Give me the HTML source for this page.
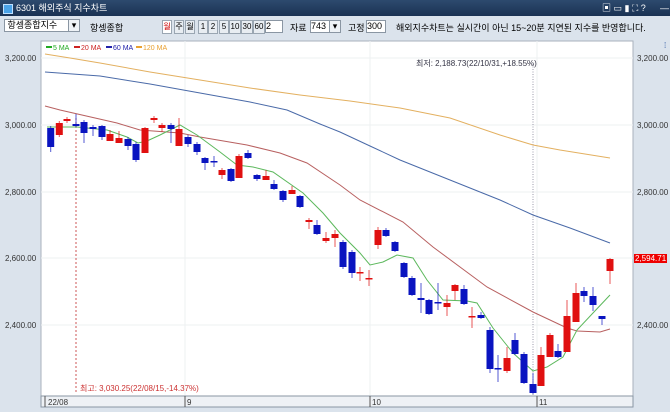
<!DOCTYPE html><html><head><meta charset="utf-8"><style>
body{margin:0;width:670px;height:412px;overflow:hidden;background:#dbe3ec;font-family:"Liberation Sans","Noto Sans CJK KR",sans-serif;position:relative}
.t{position:absolute;left:0;top:0;width:670px;height:16px;background:linear-gradient(#2d4a6e,#1a3253);color:#fff;font-size:9px;line-height:16px}
.tb{position:absolute;left:0;top:16px;width:670px;height:22px;background:#dbe3ec;font-size:9px}
.a{position:absolute;white-space:nowrap}
.bx{position:absolute;border:1px solid #8a96a3;background:#fff;height:11px;font-size:9px;line-height:11px}
.btn{position:absolute;top:20px;height:12px;width:8px;border:1px solid #9aa6b2;background:#e8edf2;font-size:8px;line-height:12px;text-align:center}
.ax{position:absolute;font-size:8px;color:#333}
</style></head><body>
<div class="t"><span class="a" style="left:3px;top:4px;width:8px;height:8px;background:#4aa3e8;border:1px solid #bfe0ff"></span><span class="a" style="left:16px">6301 해외주식 지수차트</span>
<span class="a" style="left:602px;top:0">▣ ▭ ▮ ⛶ ?</span><span class="a" style="left:660px">—</span></div>
<div class="tb">
<div class="bx" style="left:4px;top:3px;width:64px">&nbsp;항셍종합지수</div>
<div class="bx" style="left:68px;top:3px;width:10px;background:#eef2f6;text-align:center">▾</div>
<span class="a" style="left:90px;top:5px">항셍종합</span>
</div>
<div class="btn" style="left:162px;color:#c00;background:#fff">월</div>
<div class="btn" style="left:174px">주</div><div class="btn" style="left:185px">월</div>
<div class="btn" style="left:198px">1</div><div class="btn" style="left:208px">2</div><div class="btn" style="left:219px">5</div>
<div class="btn" style="left:229px;width:10px">10</div><div class="btn" style="left:241px;width:10px">30</div><div class="btn" style="left:253px;width:10px">60</div>
<div class="bx" style="left:265px;top:20px;width:16px">2</div>
<span class="a" style="left:290px;top:21px;font-size:9px">자료</span>
<div class="bx" style="left:310px;top:20px;width:18px">743</div>
<div class="bx" style="left:329px;top:20px;width:10px;background:#eef2f6;text-align:center">▾</div>
<span class="a" style="left:348px;top:21px;font-size:9px">고정</span>
<div class="bx" style="left:366px;top:20px;width:18px">300</div>
<span class="a" style="left:396px;top:21px;font-size:9px">해외지수차트는 실시간이 아닌 15~20분 지연된 지수를 반영합니다.</span>
<div class="ax" style="left:5px;top:54px">3,200.00</div><div class="ax" style="left:5px;top:121px">3,000.00</div><div class="ax" style="left:5px;top:188px">2,800.00</div><div class="ax" style="left:5px;top:254px">2,600.00</div><div class="ax" style="left:5px;top:321px">2,400.00</div>
<div class="ax" style="left:637px;top:54px">3,200.00</div><div class="ax" style="left:637px;top:121px">3,000.00</div><div class="ax" style="left:637px;top:188px">2,800.00</div><div class="ax" style="left:637px;top:321px">2,400.00</div>
<div class="ax" style="left:634px;top:254px;background:#e00;color:#fff;padding:0 1px">2,594.71</div>
<div class="ax" style="left:664px;top:41px;color:#2a55a0">⁞</div>
<svg style="position:absolute;left:0;top:0" width="670" height="412">
<rect x="41" y="41" width="592" height="355" fill="#fff" stroke="#a8b2bd"/>
<g stroke="#eef0f2" stroke-width="1"><line x1="41" y1="58" x2="633" y2="58"/><line x1="41" y1="125" x2="633" y2="125"/><line x1="41" y1="192" x2="633" y2="192"/><line x1="41" y1="258" x2="633" y2="258"/><line x1="41" y1="325" x2="633" y2="325"/><line x1="185" y1="41" x2="185" y2="396"/><line x1="370" y1="41" x2="370" y2="396"/><line x1="537" y1="41" x2="537" y2="396"/></g>
<rect x="41" y="396" width="592" height="11" fill="#eef1f5" stroke="#8a96a3"/>
<g stroke="#555"><line x1="45" y1="396" x2="45" y2="407"/><line x1="185" y1="396" x2="185" y2="407"/><line x1="370" y1="396" x2="370" y2="407"/><line x1="537" y1="396" x2="537" y2="407"/></g>
<g font-size="8" fill="#333"><text x="48" y="405">22/08</text><text x="187" y="405">9</text><text x="372" y="405">10</text><text x="539" y="405">11</text></g>
<g font-size="7"><line x1="46" y1="47" x2="52" y2="47" stroke="#2a2" stroke-width="2"/><text x="53" y="50" fill="#2a2">5 MA</text>
<line x1="74" y1="47" x2="80" y2="47" stroke="#c22" stroke-width="2"/><text x="81" y="50" fill="#c22">20 MA</text>
<line x1="106" y1="47" x2="112" y2="47" stroke="#22a" stroke-width="2"/><text x="113" y="50" fill="#22a">60 MA</text>
<line x1="136" y1="47" x2="142" y2="47" stroke="#e9a030" stroke-width="2"/><text x="143" y="50" fill="#e9a030">120 MA</text></g>
<line x1="76" y1="118" x2="76" y2="392" stroke="#c55" stroke-dasharray="2,2"/>
<line x1="533" y1="64" x2="533" y2="395" stroke="#99a" stroke-dasharray="1,1.5"/>
<text x="416" y="66" font-size="8" fill="#334">최저: 2,188.73(22/10/31,+18.55%)</text>
<text x="80" y="391" font-size="8" fill="#c33">최고: 3,030.25(22/08/15,-14.37%)</text>
<g fill="none" stroke-width="1">
<polyline stroke="#e3b060" points="45,54 70,58 100,63 150,72 200,80 250,88 300,95 350,101 400,108 450,118 500,135 533,145 560,150 610,158"/>
<polyline stroke="#4a6aa8" points="45,72 100,76 150,84 200,93 250,102 287,110 320,124 340,132 370,146 400,160 450,180 500,200 533,215 570,228 610,243"/>
<polyline stroke="#b86060" points="45,106 60,110 117,123 140,130 180,133 200,137 247,145 280,153 307,163 340,185 360,200 403,222 433,247 487,287 533,312 567,328 577,331 600,332 610,329"/>
<polyline stroke="#5cb85c" points="47,127 77,127 107,130 127,137 138,143 147,141 160,135 180,125 197,135 220,152 237,165 253,167 273,172 303,193 323,213 340,233 360,253 370,265 383,262 397,255 413,258 427,280 443,300 467,301 477,303 493,328 513,353 533,371 547,367 563,357 577,330 593,313 610,295"/>
</g>
<g id="c"></g>
</svg>
<script>
var d=[[50.7,'b',128,147,126,152],[59.3,'r',123,135,121,137],[67,'r',119,121,117,123],[76,'b',124,126,114,127],[84,'b',122,133,120,143],[93,'b',127,129,125,136],[102,'b',126,137,125,140],[110,'r',134,141,130,141],[119,'r',138,143,131,143],[128,'b',139,146,137,150],[136,'b',144,160,142,162],[145,'r',128,153,127,153],[154,'r',118,120,116,123],[162,'r',125,128,123,132],[171,'b',125,129,123,143],[179,'r',129,146,118,146],[188,'b',137,144,135,147],[197,'b',144,152,142,155],[205,'b',158,163,157,170],[214,'b',161,162,156,167],[222,'r',170,175,168,179],[231,'b',169,181,168,182],[239,'r',156,178,154,178],[248,'b',153,158,150,159],[257,'b',175,179,174,181],[266,'r',176,180,170,180],[274,'b',184,189,180,190],[283,'b',191,200,190,202],[292,'r',190,194,186,194],[300,'b',196,207,195,208],[309,'r',220,222,218,229],[317,'b',225,234,220,235],[326,'r',238,241,232,243],[335,'r',234,238,230,247],[343,'b',242,267,240,269],[352,'b',252,273,250,278],[360,'r',272,273,267,281],[369,'r',278,279,270,286],[378,'r',230,245,227,249],[386,'b',230,236,228,237],[395,'b',242,251,241,252],[404,'b',263,277,262,278],[412,'b',278,295,276,296],[421,'b',298,300,283,313],[429,'b',300,314,299,315],[438,'b',302,303,283,310],[447,'r',303,307,295,316],[455,'r',285,291,284,300],[464,'b',289,304,285,305],[472,'r',316,317,307,328],[481,'b',315,318,312,319],[490,'b',330,369,327,373],[498,'b',368,369,355,382],[507,'r',358,371,347,373],[515,'b',340,354,333,355],[524,'b',354,383,352,384],[533,'b',384,393,373,394],[541,'r',355,386,347,386],[550,'r',335,357,333,357],[558,'b',351,357,344,358],[567,'r',316,352,300,352],[576,'r',293,322,283,322],[584,'b',291,296,287,302],[593,'b',296,305,287,311],[602,'b',316,319,316,325],[610,'r',259,271,258,284]];
var s='';d.forEach(function(c){var col=c[1]=='r'?'#e01010':'#0a14c0';var h=Math.max(c[3]-c[2],1.5);
s+='<line x1="'+c[0]+'" x2="'+c[0]+'" y1="'+c[4]+'" y2="'+c[5]+'" stroke="'+col+'" stroke-opacity=".7"/><rect x="'+(c[0]-3.5)+'" y="'+c[2]+'" width="7" height="'+h+'" fill="'+col+'"/>';});
document.getElementById('c').innerHTML=s;
</script>
</body></html>
